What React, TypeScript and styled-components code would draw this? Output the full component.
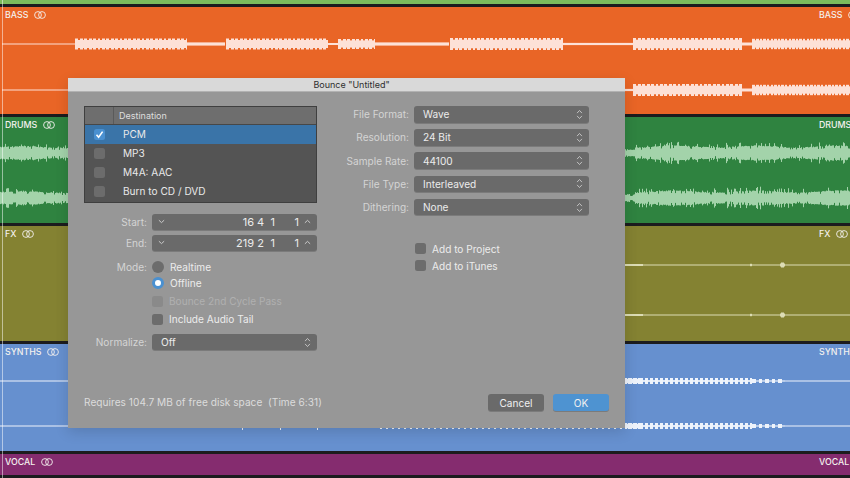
import React from 'react';
import styled, { createGlobalStyle } from 'styled-components';

type Segment = { from: number; to: number; amp: number; period?: number; noise?: number; dip?: number; duty?: number };

const GlobalStyle = createGlobalStyle`
  html, body {
    margin: 0;
    padding: 0;
    background: #1c1c1e;
  }
  body {
    font-family: Inter, "Liberation Sans", sans-serif;
    -webkit-font-smoothing: antialiased;
  }
`;

const bassWave: Segment[] = [
  { from: 2, to: 75, amp: 0.5 },
  { from: 75, to: 187, amp: 5.5, period: 4.4 },
  { from: 187, to: 225, amp: 1.6, period: 3, dip: 0.6 },
  { from: 226, to: 328, amp: 5.5, period: 4.4 },
  { from: 328, to: 338, amp: 1 },
  { from: 338, to: 375, amp: 5, period: 4.4 },
  { from: 375, to: 449, amp: 1.6, period: 3, dip: 0.6 },
  { from: 450, to: 563, amp: 6, period: 4.4 },
  { from: 563, to: 633, amp: 1.1, period: 3, dip: 0.6 },
  { from: 633, to: 742, amp: 6, period: 4.4 },
  { from: 742, to: 752, amp: 1.5 },
  { from: 752, to: 850, amp: 5.2, period: 3.6 },
];

const drumsWave: Segment[] = [
  { from: 0, to: 68, amp: 6, noise: 4 },
  { from: 625, to: 635, amp: 4, noise: 1 },
  { from: 635, to: 850, amp: 6.5, noise: 5 },
];

const fxWave: Segment[] = [
  { from: 625, to: 643, amp: 1 },
  { from: 643, to: 750, amp: 0.5 },
  { from: 750, to: 752, amp: 1.2 },
  { from: 752, to: 780, amp: 0.5 },
  { from: 780, to: 781, amp: 1.5 },
  { from: 781, to: 784, amp: 2.5 },
  { from: 784, to: 785, amp: 1.5 },
  { from: 785, to: 850, amp: 0.5 },
];

const synthWave: Segment[] = [
  { from: 0, to: 242, amp: 0.5 },
  { from: 242, to: 243, amp: 4 },
  { from: 243, to: 280, amp: 0.5 },
  { from: 280, to: 281, amp: 4 },
  { from: 281, to: 317, amp: 0.5 },
  { from: 317, to: 318, amp: 4 },
  { from: 318, to: 380, amp: 0.5 },
  { from: 380, to: 625, amp: 3, period: 6, dip: 0.3, duty: 0.3 },
  { from: 625, to: 640, amp: 3, period: 2.5 },
  { from: 640, to: 752, amp: 3, period: 5, dip: 0.3, duty: 0.6 },
  { from: 752, to: 785, amp: 2, period: 6.5, dip: 0.3, duty: 0.5 },
  { from: 785, to: 850, amp: 0.5 },
];

const wavePath = (segments: Segment[], center: number, seed: number) => {
  let rnd = seed;
  const next = () => {
    rnd = (rnd * 9301 + 49297) % 233280;
    return rnd / 233280;
  };
  let d = '';
  segments.forEach(({ from, to, amp, period, noise, dip = 0.72, duty = 0.68 }) => {
    for (let x = from; x < to; x += 1) {
      let h = amp;
      if (period) {
        const phase = ((x - from) % period) / period;
        h = phase < duty ? amp : Math.max(amp * dip, 0.5);
      }
      if (noise) {
        h = amp * (0.9 + 0.15 * Math.sin(x / 13)) + (next() > 0.72 ? next() * noise : next());
        if (next() > 0.82) h *= 0.65;
      }
      d += `M${x + 0.5} ${(center - h).toFixed(1)}V${(center + h).toFixed(1)}`;
    }
  });
  return d;
};

const StereoIcon = () => (
  <StereoSvg viewBox="0 0 12 8">
    <circle cx="4" cy="4" r="3.4" />
    <circle cx="8" cy="4" r="3.4" />
  </StereoSvg>
);

const TrackTitle = ({ name }: { name: string }) => (
  <TitleGroup>
    {name}
    <StereoIcon />
  </TitleGroup>
);

const Arrows = () => (
  <ArrowSvg viewBox="0 0 8 12">
    <path d="M1.2 4.4 4 1.4l2.8 3M1.2 7.6 4 10.6l2.8-3" />
  </ArrowSvg>
);

const Chevron = ({ up }: { up?: boolean }) => (
  <ChevronSvg viewBox="0 0 8 5">
    <path d={up ? 'M1 4 4 1.2 7 4' : 'M1 1 4 3.8 7 1'} />
  </ChevronSvg>
);

const Stepper = ({ values }: { values: string[] }) => (
  <StepperBox>
    <Chevron />
    <StepValue $width={22}>{values[0]}</StepValue>
    <StepValue $width={10}>{values[1]}</StepValue>
    <StepValue $width={11}>{values[2]}</StepValue>
    <StepValue $width={24}>{values[3]}</StepValue>
    <StepEnd>
      <Chevron up />
    </StepEnd>
  </StepperBox>
);

const tracks = [
  { name: 'BASS', color: '#e96526', ink: '#fde1d7', height: 110, wave: bassWave, centers: [37, 83] },
  { name: 'DRUMS', color: '#2f8340', ink: '#a3d3aa', height: 109, wave: drumsWave, centers: [36, 81] },
  { name: 'FX', color: '#848232', ink: '#dcdcb4', height: 118, wave: fxWave, centers: [39, 89] },
  { name: 'SYNTHS', color: '#6690cf', ink: '#eef3fb', height: 110, wave: synthWave, centers: [37, 82] },
];

const destinations = ['PCM', 'MP3', 'M4A: AAC', 'Burn to CD / DVD'];

const settings = [
  { label: 'File Format:', value: 'Wave' },
  { label: 'Resolution:', value: '24 Bit' },
  { label: 'Sample Rate:', value: '44100' },
  { label: 'File Type:', value: 'Interleaved' },
  { label: 'Dithering:', value: 'None' },
];

const App: React.FC = () => {
  return (
    <Screen>
      <GlobalStyle />
      <Track $color="#7cbb5c" $height={7} />
      {tracks.map((track, i) => (
        <Track key={track.name} $color={track.color} $height={track.height}>
          <WaveSvg width="850" height={track.height}>
            {track.centers.map((center, c) => (
              <path key={c} d={wavePath(track.wave, center, 17 + i * 31 + c)} stroke={track.ink} strokeWidth="1" />
            ))}
          </WaveSvg>
          <TrackHeader>
            <TrackTitle name={track.name} />
            <RightTitle>
              <TrackTitle name={track.name} />
            </RightTitle>
          </TrackHeader>
        </Track>
      ))}
      <Track $color="#852c6f" $height={24}>
        <TrackHeader>
          <TrackTitle name="VOCAL" />
          <RightTitle>
            <TrackTitle name="VOCAL" />
          </RightTitle>
        </TrackHeader>
      </Track>
      <Playhead />

      <Dialog>
        <TitleBar>Bounce "Untitled"</TitleBar>
        <DialogBody>
          <Columns>
            <LeftColumn>
              <DestTable>
                <DestHead>
                  <HeadCheck />
                  <span>Destination</span>
                </DestHead>
                {destinations.map((dest, i) => (
                  <DestRow key={dest} $active={i === 0}>
                    <CheckCell>
                      <CheckBox $checked={i === 0}>
                        {i === 0 && (
                          <svg width="9" height="9" viewBox="0 0 9 9" fill="none" stroke="#fff" strokeWidth="1.6">
                            <path d="M1.5 4.8 3.6 7.2 7.6 1.6" />
                          </svg>
                        )}
                      </CheckBox>
                    </CheckCell>
                    <span>{dest}</span>
                  </DestRow>
                ))}
              </DestTable>

              <FormRow $top={10.7} $height={16.5}>
                <FieldLabel>Start:</FieldLabel>
                <Stepper values={['16', '4', '1', '1']} />
              </FormRow>
              <FormRow $top={4.5} $height={16.5}>
                <FieldLabel>End:</FieldLabel>
                <Stepper values={['219', '2', '1', '1']} />
              </FormRow>
              <FormRow $top={8.3} $height={16}>
                <FieldLabel>Mode:</FieldLabel>
                <Option>
                  <Radio />
                  Realtime
                </Option>
              </FormRow>
              <FormRow $height={16}>
                <span />
                <Option>
                  <Radio $on />
                  Offline
                </Option>
              </FormRow>
              <FormRow $top={2} $height={16}>
                <span />
                <Option $disabled>
                  <CheckBox $faded />
                  Bounce 2nd Cycle Pass
                </Option>
              </FormRow>
              <FormRow $top={2} $height={16}>
                <span />
                <Option>
                  <CheckBox />
                  Include Audio Tail
                </Option>
              </FormRow>
              <FormRow $top={6.3} $height={16.5}>
                <FieldLabel>Normalize:</FieldLabel>
                <PopUp>
                  Off
                  <Arrows />
                </PopUp>
              </FormRow>
            </LeftColumn>

            <RightColumn>
              {settings.map(s => (
                <SettingRow key={s.label}>
                  <FieldLabel>{s.label}</FieldLabel>
                  <PopUp>
                    {s.value}
                    <Arrows />
                  </PopUp>
                </SettingRow>
              ))}
              <Extras>
                <Option>
                  <CheckBox />
                  Add to Project
                </Option>
                <Option>
                  <CheckBox />
                  Add to iTunes
                </Option>
              </Extras>
            </RightColumn>
          </Columns>

          <Footer>
            <DiskNote>Requires 104.7 MB of free disk space&nbsp; (Time 6:31)</DiskNote>
            <Buttons>
              <DialogButton>Cancel</DialogButton>
              <DialogButton $primary>OK</DialogButton>
            </Buttons>
          </Footer>
        </DialogBody>
      </Dialog>
    </Screen>
  );
};

const Screen = styled.div`
  position: relative;
  width: 850px;
  height: 478px;
  overflow: hidden;
  display: flex;
  flex-direction: column;
`;

const Track = styled.div<{ $color: string; $height: number }>`
  position: relative;
  flex: none;
  box-sizing: border-box;
  height: ${p => p.$height}px;
  background: ${p => p.$color};
  border-bottom: 3px solid #1c1c1e;
  overflow: hidden;
  &:last-of-type {
    border-bottom: none;
  }
`;

const WaveSvg = styled.svg`
  position: absolute;
  left: 0;
  top: 0;
  overflow: visible;
`;

const TrackHeader = styled.div`
  position: relative;
  display: flex;
  justify-content: space-between;
  align-items: center;
  padding: 2px 0 0 5px;
  height: 11px;
`;

const TitleGroup = styled.div`
  display: flex;
  align-items: center;
  gap: 6px;
  font-size: 8.8px;
  font-weight: 500;
  color: #f4f1ee;
  white-space: nowrap;
`;

const RightTitle = styled.div`
  width: 31px;
  flex: none;
`;

const StereoSvg = styled.svg`
  width: 12px;
  height: 8px;
  flex: none;
  fill: none;
  stroke: #f4f1ee;
  stroke-width: 0.9;
`;

const Playhead = styled.div`
  position: absolute;
  left: 2px;
  top: 0;
  bottom: 0;
  width: 1px;
  background: rgba(255, 255, 255, 0.5);
`;

const Dialog = styled.div`
  position: absolute;
  left: 68px;
  top: 78px;
  width: 557px;
  height: 350px;
  display: flex;
  flex-direction: column;
  background: #979797;
  border-radius: 2px 2px 0 0;
  box-shadow: 0 4px 14px rgba(0, 0, 0, 0.14);
`;

const TitleBar = styled.div`
  flex: none;
  height: 13px;
  line-height: 13px;
  padding-left: 10px;
  text-align: center;
  font-size: 9px;
  color: #2e2e2e;
  background: #d9d9d9;
  border-bottom: 1px solid #b2b2b2;
`;

const DialogBody = styled.div`
  flex: 1;
  display: flex;
  flex-direction: column;
  padding: 14px 16px 17px;
  font-size: 10.1px;
`;

const Columns = styled.div`
  display: flex;
  gap: 23px;
`;

const LeftColumn = styled.div`
  width: 233px;
  flex: none;
`;

const RightColumn = styled.div`
  width: 250px;
  flex: none;
`;

const DestTable = styled.div`
  box-sizing: border-box;
  height: 97px;
  background: #545454;
  border: 1px solid #3f3f3f;
  color: #e9e9e9;
`;

const DestHead = styled.div`
  display: flex;
  align-items: center;
  height: 17px;
  background: #6e6e6e;
  border-bottom: 1px solid #474747;
  font-size: 9px;
  color: #dedede;
`;

const HeadCheck = styled.div`
  width: 28px;
  height: 100%;
  margin-right: 5px;
  border-right: 1px solid #5a5a5a;
`;

const DestRow = styled.div<{ $active?: boolean }>`
  display: flex;
  align-items: center;
  height: 18.9px;
  background: ${p => (p.$active ? '#3a74a8' : 'transparent')};
`;

const CheckCell = styled.div`
  width: 29px;
  flex: none;
  display: flex;
  justify-content: center;
  margin-right: 9px;
`;

const CheckBox = styled.span<{ $checked?: boolean; $faded?: boolean }>`
  display: inline-flex;
  align-items: center;
  justify-content: center;
  width: 11px;
  height: 11px;
  flex: none;
  border-radius: 2.5px;
  background: ${p => (p.$checked ? '#4a90d0' : p.$faded ? '#8a8a8a' : '#6c6c6c')};
`;

const FormRow = styled.div<{ $top?: number; $height: number }>`
  display: grid;
  grid-template-columns: 63px 1fr;
  column-gap: 5px;
  align-items: center;
  height: ${p => p.$height}px;
  margin-top: ${p => p.$top ?? 0}px;
`;

const FieldLabel = styled.span`
  text-align: right;
  color: #d4d4d4;
  white-space: nowrap;
`;

const StepperBox = styled.div`
  display: flex;
  align-items: center;
  height: 16.5px;
  padding: 0 6px;
  border-radius: 3px;
  background: #6a6a6a;
  box-shadow: 0 1px 0 #7b7b7b;
  font-size: 11px;
  color: #ececec;
`;

const StepValue = styled.span<{ $width: number }>`
  flex: none;
  width: ${p => p.$width}px;
  text-align: right;
  &:nth-of-type(1) {
    margin-left: auto;
  }
`;

const StepEnd = styled.span`
  display: flex;
  margin-left: 5px;
`;

const ChevronSvg = styled.svg`
  width: 7px;
  height: 5px;
  flex: none;
  fill: none;
  stroke: #d8d8d8;
  stroke-width: 1;
`;

const Option = styled.div<{ $disabled?: boolean }>`
  display: flex;
  align-items: center;
  gap: 6px;
  color: ${p => (p.$disabled ? '#b0b0b0' : '#ececec')};
`;

const Radio = styled.span<{ $on?: boolean }>`
  box-sizing: border-box;
  width: 12px;
  height: 12px;
  flex: none;
  border-radius: 50%;
  background: ${p => (p.$on ? '#fff' : '#6c6c6c')};
  border: ${p => (p.$on ? '3.5px solid #4a90d0' : 'none')};
`;

const PopUp = styled.div`
  display: flex;
  align-items: center;
  justify-content: space-between;
  height: 16.5px;
  padding: 0 6px 0 9px;
  border-radius: 3px;
  background: #6a6a6a;
  box-shadow: 0 1px 0 #7b7b7b;
  color: #ececec;
`;

const ArrowSvg = styled.svg`
  width: 7px;
  height: 11px;
  flex: none;
  fill: none;
  stroke: #d8d8d8;
  stroke-width: 0.9;
`;

const SettingRow = styled.div`
  display: grid;
  grid-template-columns: 69px 175px;
  column-gap: 5px;
  align-items: center;
  margin-bottom: 6.7px;
`;

const Extras = styled.div`
  display: flex;
  flex-direction: column;
  gap: 4px;
  margin: 27.2px 0 0 75px;
  & > div {
    height: 13px;
  }
`;

const Footer = styled.div`
  margin-top: auto;
  display: flex;
  align-items: center;
  justify-content: space-between;
`;

const DiskNote = styled.span`
  padding-bottom: 1px;
  letter-spacing: 0.04px;
  color: #dcdcdc;
`;

const Buttons = styled.div`
  display: flex;
  gap: 9px;
`;

const DialogButton = styled.button<{ $primary?: boolean }>`
  width: 56px;
  height: 17px;
  padding: 0;
  border: none;
  border-radius: 3px;
  font-family: inherit;
  font-size: 10.1px;
  color: #f0f0f0;
  background: ${p => (p.$primary ? '#4e93d1' : '#6a6a6a')};
  box-shadow: 0 1px 0 #7b7b7b;
`;

export default App;
